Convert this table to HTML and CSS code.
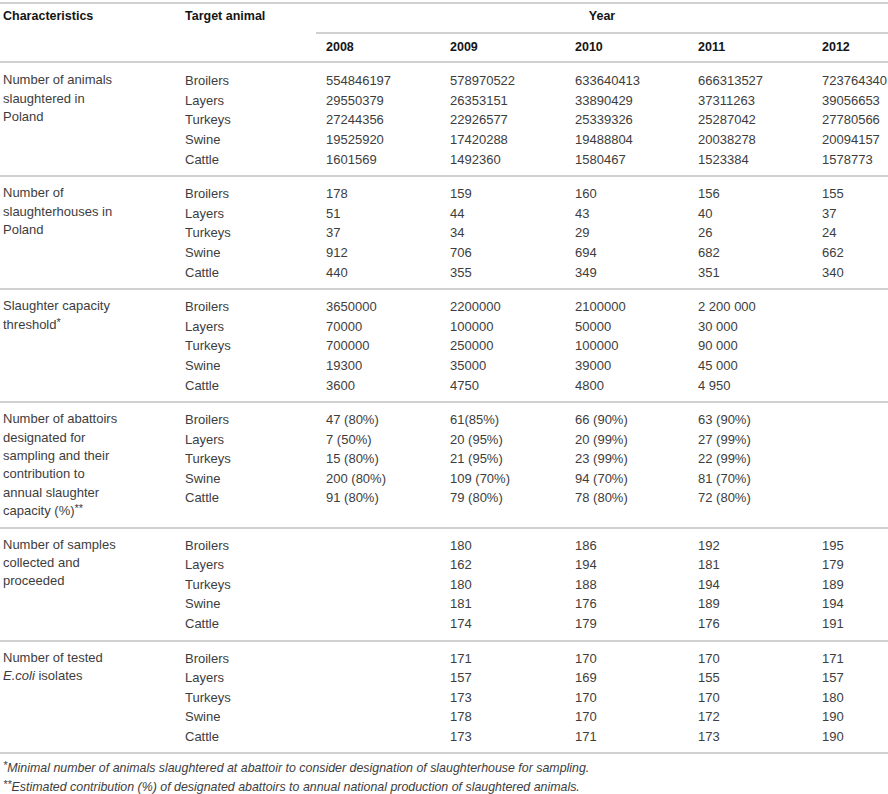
FILE: index.html
```html
<!DOCTYPE html>
<html>
<head>
<meta charset="utf-8">
<link rel="stylesheet" href="styles.css">
</head>
<body>
<table class="data">
  <colgroup>
    <col class="c-char">
    <col class="c-animal">
    <col class="c-y1">
    <col class="c-y2">
    <col class="c-y3">
    <col class="c-y4">
    <col class="c-y5">
  </colgroup>
  <thead>
    <tr class="head1">
      <th class="char" rowspan="2">Characteristics</th>
      <th rowspan="2">Target animal</th>
      <th class="year" colspan="5">Year</th>
    </tr>
    <tr class="head2">
      <th>2008</th>
      <th>2009</th>
      <th>2010</th>
      <th>2011</th>
      <th>2012</th>
    </tr>
  </thead>
  <tbody>
    <tr class="group first">
      <td class="char">Number of animals<br>slaughtered in<br>Poland</td>
      <td><div class="ln">Broilers</div><div class="ln">Layers</div><div class="ln">Turkeys</div><div class="ln">Swine</div><div class="ln">Cattle</div></td>
      <td><div class="ln">554846197</div><div class="ln">29550379</div><div class="ln">27244356</div><div class="ln">19525920</div><div class="ln">1601569</div></td>
      <td><div class="ln">578970522</div><div class="ln">26353151</div><div class="ln">22926577</div><div class="ln">17420288</div><div class="ln">1492360</div></td>
      <td><div class="ln">633640413</div><div class="ln">33890429</div><div class="ln">25339326</div><div class="ln">19488804</div><div class="ln">1580467</div></td>
      <td><div class="ln">666313527</div><div class="ln">37311263</div><div class="ln">25287042</div><div class="ln">20038278</div><div class="ln">1523384</div></td>
      <td><div class="ln">723764340</div><div class="ln">39056653</div><div class="ln">27780566</div><div class="ln">20094157</div><div class="ln">1578773</div></td>
    </tr>
    <tr class="group">
      <td class="char">Number of<br>slaughterhouses in<br>Poland</td>
      <td><div class="ln">Broilers</div><div class="ln">Layers</div><div class="ln">Turkeys</div><div class="ln">Swine</div><div class="ln">Cattle</div></td>
      <td><div class="ln">178</div><div class="ln">51</div><div class="ln">37</div><div class="ln">912</div><div class="ln">440</div></td>
      <td><div class="ln">159</div><div class="ln">44</div><div class="ln">34</div><div class="ln">706</div><div class="ln">355</div></td>
      <td><div class="ln">160</div><div class="ln">43</div><div class="ln">29</div><div class="ln">694</div><div class="ln">349</div></td>
      <td><div class="ln">156</div><div class="ln">40</div><div class="ln">26</div><div class="ln">682</div><div class="ln">351</div></td>
      <td><div class="ln">155</div><div class="ln">37</div><div class="ln">24</div><div class="ln">662</div><div class="ln">340</div></td>
    </tr>
    <tr class="group">
      <td class="char">Slaughter capacity<br>threshold<sup>*</sup></td>
      <td><div class="ln">Broilers</div><div class="ln">Layers</div><div class="ln">Turkeys</div><div class="ln">Swine</div><div class="ln">Cattle</div></td>
      <td><div class="ln">3650000</div><div class="ln">70000</div><div class="ln">700000</div><div class="ln">19300</div><div class="ln">3600</div></td>
      <td><div class="ln">2200000</div><div class="ln">100000</div><div class="ln">250000</div><div class="ln">35000</div><div class="ln">4750</div></td>
      <td><div class="ln">2100000</div><div class="ln">50000</div><div class="ln">100000</div><div class="ln">39000</div><div class="ln">4800</div></td>
      <td><div class="ln">2 200 000</div><div class="ln">30 000</div><div class="ln">90 000</div><div class="ln">45 000</div><div class="ln">4 950</div></td>
      <td></td>
    </tr>
    <tr class="group">
      <td class="char">Number of abattoirs<br>designated for<br>sampling and their<br>contribution to<br>annual slaughter<br>capacity (%)<sup>**</sup></td>
      <td><div class="ln">Broilers</div><div class="ln">Layers</div><div class="ln">Turkeys</div><div class="ln">Swine</div><div class="ln">Cattle</div></td>
      <td><div class="ln">47 (80%)</div><div class="ln">7 (50%)</div><div class="ln">15 (80%)</div><div class="ln">200 (80%)</div><div class="ln">91 (80%)</div></td>
      <td><div class="ln">61(85%)</div><div class="ln">20 (95%)</div><div class="ln">21 (95%)</div><div class="ln">109 (70%)</div><div class="ln">79 (80%)</div></td>
      <td><div class="ln">66 (90%)</div><div class="ln">20 (99%)</div><div class="ln">23 (99%)</div><div class="ln">94 (70%)</div><div class="ln">78 (80%)</div></td>
      <td><div class="ln">63 (90%)</div><div class="ln">27 (99%)</div><div class="ln">22 (99%)</div><div class="ln">81 (70%)</div><div class="ln">72 (80%)</div></td>
      <td></td>
    </tr>
    <tr class="group">
      <td class="char">Number of samples<br>collected and<br>proceeded</td>
      <td><div class="ln">Broilers</div><div class="ln">Layers</div><div class="ln">Turkeys</div><div class="ln">Swine</div><div class="ln">Cattle</div></td>
      <td></td>
      <td><div class="ln">180</div><div class="ln">162</div><div class="ln">180</div><div class="ln">181</div><div class="ln">174</div></td>
      <td><div class="ln">186</div><div class="ln">194</div><div class="ln">188</div><div class="ln">176</div><div class="ln">179</div></td>
      <td><div class="ln">192</div><div class="ln">181</div><div class="ln">194</div><div class="ln">189</div><div class="ln">176</div></td>
      <td><div class="ln">195</div><div class="ln">179</div><div class="ln">189</div><div class="ln">194</div><div class="ln">191</div></td>
    </tr>
    <tr class="group">
      <td class="char">Number of tested<br><i>E.coli</i> isolates</td>
      <td><div class="ln">Broilers</div><div class="ln">Layers</div><div class="ln">Turkeys</div><div class="ln">Swine</div><div class="ln">Cattle</div></td>
      <td></td>
      <td><div class="ln">171</div><div class="ln">157</div><div class="ln">173</div><div class="ln">178</div><div class="ln">173</div></td>
      <td><div class="ln">170</div><div class="ln">169</div><div class="ln">170</div><div class="ln">170</div><div class="ln">171</div></td>
      <td><div class="ln">170</div><div class="ln">155</div><div class="ln">170</div><div class="ln">172</div><div class="ln">173</div></td>
      <td><div class="ln">171</div><div class="ln">157</div><div class="ln">180</div><div class="ln">190</div><div class="ln">190</div></td>
    </tr>
  </tbody>
</table>
<div class="notes">
  <p><sup>*</sup>Minimal number of animals slaughtered at abattoir to consider designation of slaughterhouse for sampling.</p>
  <p><sup>**</sup>Estimated contribution (%) of designated abattoirs to annual national production of slaughtered animals.</p>
</div>
</body>
</html>
```

FILE: styles.css
```css
html, body {
  margin: 0;
  padding: 0;
  background: #ffffff;
}

body {
  font-family: "Liberation Sans", Arial, Helvetica, sans-serif;
  font-size: 13px;
  color: #3d3d3d;
  padding-top: 2px;
}

.data {
  width: 888px;
  table-layout: fixed;
  border-collapse: collapse;
  border-spacing: 0;
}

.c-char { width: 175px; }
.c-animal { width: 141px; }
.c-y1 { width: 124px; }
.c-y2 { width: 125px; }
.c-y3 { width: 123px; }
.c-y4 { width: 124px; }
.c-y5 { width: 76px; }

.data th,
.data td {
  padding: 0 0 0 10px;
  text-align: left;
  vertical-align: top;
  white-space: nowrap;
}

.data th {
  font-size: 12.5px;
  font-weight: bold;
  color: #151515;
  line-height: 19.6px;
}

.data .char {
  padding-left: 3px;
}

.head1 {
  border-top: 2px solid #d0d0d0;
}

.head1 th {
  padding-top: 3px;
  padding-bottom: 5px;
}

.head1 th.year {
  text-align: center;
  padding-left: 0;
  border-bottom: 2px solid #d0d0d0;
}

.head2 th {
  padding-top: 4px;
  padding-bottom: 4px;
}

.head2 {
  border-bottom: 2px solid #d0d0d0;
}

.group {
  border-bottom: 2px solid #d0d0d0;
}

.group td {
  padding-top: 7px;
  padding-bottom: 6px;
}

.group.first td {
  padding-top: 8px;
}

.group td.char {
  line-height: 18.4px;
}

.ln {
  line-height: 19.6px;
  height: 19.6px;
}

sup {
  font-size: 11px;
  line-height: 0;
  vertical-align: 3px;
}

.notes {
  padding: 5px 0 0 3px;
  font-size: 12.4px;
  font-style: italic;
  color: #3d3d3d;
}

.notes p {
  margin: 0;
  line-height: 19px;
}
```
